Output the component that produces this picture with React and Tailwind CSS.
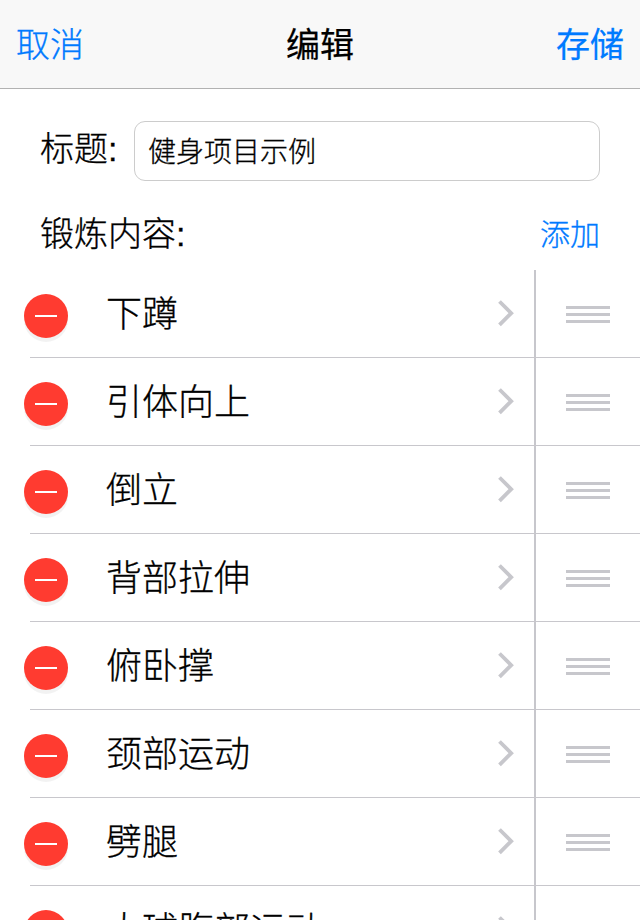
import { useState } from 'react';

const initialExercises = [
  { id: 1, name: '下蹲' },
  { id: 2, name: '引体向上' },
  { id: 3, name: '倒立' },
  { id: 4, name: '背部拉伸' },
  { id: 5, name: '俯卧撑' },
  { id: 6, name: '颈部运动' },
  { id: 7, name: '劈腿' },
  { id: 8, name: '大球腹部运动' },
];

const ExerciseRow = ({ name, onDelete }) => (
  <li className="flex h-22">
    <button onClick={onDelete} title="删除" className="ml-6 mt-6 size-11 shrink-0 rounded-full bg-[#ff3b30] shadow-[0_4px_0_rgba(0,0,0,0.05)] flex items-center justify-center cursor-pointer z-10">
      <span className="w-[22px] h-0.5 bg-white" />
    </button>
    {/* The separator starts under the delete button, not at the screen edge */}
    <div className="-ml-[38px] flex-1 flex border-b border-[#c8c7cc]">
      <div className="flex-1 flex justify-between pl-[76px] pr-5">
        <span className="pt-px text-[36px] leading-[87px] whitespace-nowrap">{name}</span>
        <svg className="mt-[30px]" width="16" height="27" viewBox="0 0 16 27" fill="none" stroke="#c7c7cc" strokeWidth="3.8">
          <path d="M1.5 1.5 L13.2 13.2 L1.5 24.9" />
        </svg>
      </div>
      <div className="w-[106px] border-l-2 border-[#c7c7cc] pl-[30px] pt-9 flex flex-col gap-1">
        <span className="w-11 h-[3px] bg-[#c7c7cc]" />
        <span className="w-11 h-[3px] bg-[#c7c7cc]" />
        <span className="w-11 h-[3px] bg-[#c7c7cc]" />
      </div>
    </div>
  </li>
);

const App = () => {
  const [title, setTitle] = useState('健身项目示例');
  const [exercises, setExercises] = useState(initialExercises);

  const addExercise = () => {
    setExercises(prev => [...prev, { id: Date.now(), name: '下蹲' }]);
  };

  const removeExercise = (id) => {
    setExercises(prev => prev.filter(e => e.id !== id));
  };

  return (
    <div className="w-[640px] h-[920px] overflow-hidden bg-white text-black font-light [-webkit-text-stroke:0.3px] font-['Liberation_Sans','Noto_Sans_CJK_SC',sans-serif]">
      <header className="h-[89px] px-4 pt-0.5 flex items-center justify-between bg-[#f8f8f8] border-b border-[#b2b2b2] text-[34px] leading-[86px]">
        <button className="text-[#007aff] cursor-pointer">取消</button>
        <h1 className="font-normal [-webkit-text-stroke:0.25px]">编辑</h1>
        <button className="font-normal [-webkit-text-stroke:0.25px] text-[#007aff] cursor-pointer">存储</button>
      </header>

      <div className="px-10 pt-8 flex">
        <label htmlFor="title" className="w-[94px] text-[34px] leading-[56px]">标题:</label>
        <input
          id="title"
          value={title}
          onChange={e => setTitle(e.target.value)}
          className="flex-1 min-w-0 h-[60px] px-[13px] pb-[3px] border border-[#cccccc] rounded-[11px] text-[28px] [-webkit-text-stroke:0.3px] outline-none"
        />
      </div>

      <div className="h-[89px] px-10 pt-6 flex justify-between">
        <h2 className="text-[34px] leading-[58px]">锻炼内容:</h2>
        <button onClick={addExercise} className="h-[60px] text-[30px] leading-[60px] text-[#007aff] cursor-pointer">添加</button>
      </div>

      <ul>
        {exercises.map(e => (
          <ExerciseRow key={e.id} name={e.name} onDelete={() => removeExercise(e.id)} />
        ))}
      </ul>
    </div>
  );
};

export default App;
